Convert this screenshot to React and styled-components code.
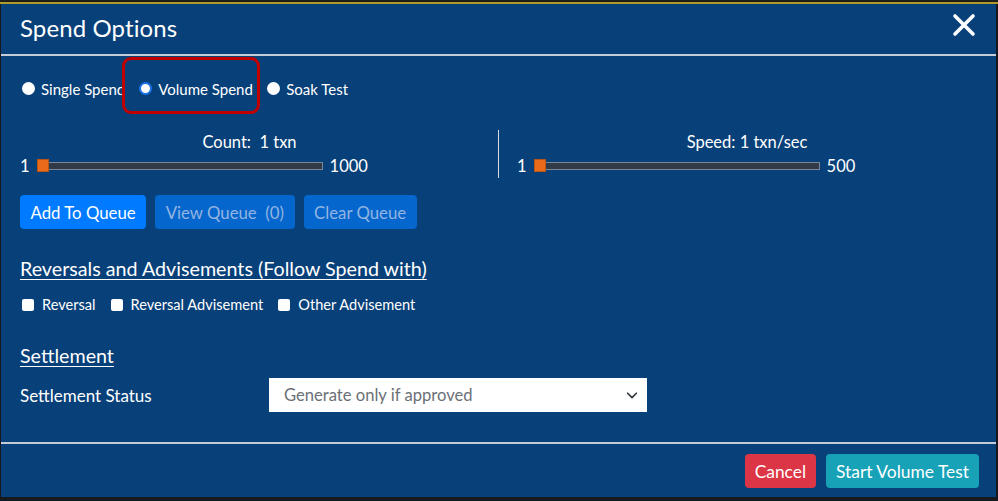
import React from "react";
import styled, { createGlobalStyle } from "styled-components";

const Global = createGlobalStyle`
  html, body { margin: 0; padding: 0; }
  body {
    width: 998px;
    height: 501px;
    overflow: hidden;
    background: #16191d;
    font-family: Lato, "Noto Sans", sans-serif;
  }
`;

const TopStrip = styled.div`
  height: 4px;
  background: #1e1f1c;
  box-shadow: inset 0 -2px 0 #b09a2a;
`;

const Modal = styled.div`
  margin-left: 1px;
  width: 995px;
  height: 493px;
  background: #084079;
  color: #ffffff;
  display: flex;
  flex-direction: column;
`;

const Header = styled.div`
  height: 52px;
  box-sizing: border-box;
  border-bottom: 2px solid #c4ccd6;
  display: flex;
  align-items: center;
  justify-content: space-between;
  padding: 0 20px 0 19px;
`;

const Title = styled.h1`
  margin: -3px 0 0 0;
  font-size: 24px;
  font-weight: 400;
  letter-spacing: 0.1px;
`;

const Close = styled.button`
  background: none;
  border: 0;
  padding: 0;
  width: 28px;
  height: 28px;
  display: flex;
  align-items: center;
  justify-content: center;
  margin-top: -9px;
  margin-right: -2px;
`;

const Body = styled.div`
  flex: 1;
  display: flex;
  flex-direction: column;
  border-bottom: 2px solid #c4ccd6;
`;

const RadioRow = styled.div`
  display: flex;
  align-items: center;
  padding: 6px 0 0 21px;
  box-sizing: border-box;
  height: 57px;
  margin-top: 1px;
  font-size: 15px;
`;

const Option = styled.label`
  display: flex;
  align-items: center;
  gap: 6px;
  white-space: nowrap;
`;

const Radio = styled.span`
  width: 13px;
  height: 13px;
  border-radius: 50%;
  box-sizing: border-box;
  background: #ffffff;
  border: ${(p) => (p.$checked ? "2px solid #1a73e8" : "0")};
  flex: none;
`;

const Annotation = styled.div`
  display: flex;
  align-items: center;
  height: 57px;
  box-sizing: border-box;
  border: 3px solid #c00000;
  border-radius: 9px;
  background: #084079;
  padding: 6px 0 0 14px;
  margin-top: -6px;
  margin-left: -3px;
  margin-right: 7px;
  width: 138px;
  flex: none;
`;

const Sliders = styled.div`
  display: grid;
  grid-template-columns: 497px 1fr;
  margin-top: 16px;
`;

const SliderCol = styled.div`
  display: flex;
  flex-direction: column;
  border-left: ${(p) => (p.$divider ? "1px solid #d8dde3" : "0")};
  padding-left: ${(p) => (p.$divider ? 18 : 19)}px;
  height: 48px;
  box-sizing: border-box;
`;

const SliderLabel = styled.div`
  text-align: center;
  font-size: 16.5px;
  line-height: 20px;
  margin-left: -19px;
  padding-top: 2px;
  white-space: pre;
`;

const SliderLine = styled.div`
  display: flex;
  align-items: center;
  font-size: 16.5px;
  line-height: 20px;
  margin-top: 4px;
  gap: 5px;
`;

const Track = styled.div`
  position: relative;
  width: 285px;
  height: 8px;
  box-sizing: border-box;
  background: #303b47;
  border: 1px solid #7b8794;
  margin: 0 2px 0 3px;
`;

const Thumb = styled.span`
  position: absolute;
  left: -2px;
  top: -4px;
  width: 12px;
  height: 13px;
  box-sizing: border-box;
  background: #e86a1a;
  border: 1px solid #b85515;
`;

const ButtonRow = styled.div`
  display: flex;
  gap: 9px;
  padding-left: 19px;
  margin-top: 17px;
`;

const QueueButton = styled.button`
  height: 34px;
  border: 0;
  border-radius: 4px;
  padding: 0 10.5px;
  font-family: inherit;
  font-size: 16.8px;
  background: ${(p) => (p.$disabled ? "#0566cd" : "#007bff")};
  color: ${(p) => (p.$disabled ? "#93b4e1" : "#ffffff")};
  white-space: pre;
`;

const SectionTitle = styled.h2`
  margin: ${(p) => p.$top}px 0 0 19px;
  font-size: 19.7px;
  font-weight: 400;
  text-decoration: underline;
  text-underline-offset: 3px;
  text-decoration-thickness: 1px;
  line-height: 24px;
`;

const CheckRow = styled.div`
  display: flex;
  align-items: center;
  gap: 15px;
  padding-left: 21px;
  margin-top: 14px;
  font-size: 14.6px;
  line-height: 20px;
`;

const Check = styled.span`
  width: 12px;
  height: 12px;
  border-radius: 2px;
  background: #ffffff;
  flex: none;
`;

const CheckOption = styled.label`
  display: flex;
  align-items: center;
  gap: 8px;
`;

const FieldRow = styled.div`
  display: flex;
  align-items: center;
  padding-left: 19px;
  margin-top: 10px;
`;

const FieldLabel = styled.div`
  width: 249px;
  font-size: 17px;
`;

const Select = styled.div`
  width: 378px;
  height: 34px;
  background: #ffffff;
  color: #6b7076;
  font-size: 16.6px;
  display: flex;
  align-items: center;
  justify-content: space-between;
  padding: 0 8px 0 15px;
  box-sizing: border-box;
`;

const Footer = styled.div`
  display: flex;
  justify-content: flex-end;
  gap: 10px;
  padding: 10px 17px 0 0;
  height: 53px;
  box-sizing: border-box;
`;

const FooterButton = styled.button`
  height: 34px;
  border: 0;
  border-radius: 4px;
  padding: 0 10px;
  font-family: inherit;
  font-size: 17.4px;
  color: #ffffff;
  background: ${(p) => p.$bg};
`;

export default function App() {
  return (
    <>
      <Global />
      <TopStrip />
      <Modal>
        <Header>
          <Title>Spend Options</Title>
          <Close aria-label="close">
            <svg width="24" height="24" viewBox="0 0 24 24">
              <path d="M3 3 L21 21 M21 3 L3 21" stroke="#fff" strokeWidth="3.6" strokeLinecap="round" />
            </svg>
          </Close>
        </Header>
        <Body>
          <RadioRow>
            <Option>
              <Radio />
              Single Spend
            </Option>
            <Annotation>
              <Option>
                <Radio $checked />
                Volume Spend
              </Option>
            </Annotation>
            <Option>
              <Radio />
              Soak Test
            </Option>
          </RadioRow>
          <Sliders>
            <SliderCol>
              <SliderLabel>Count:  1 txn</SliderLabel>
              <SliderLine>
                1
                <Track>
                  <Thumb />
                </Track>
                1000
              </SliderLine>
            </SliderCol>
            <SliderCol $divider>
              <SliderLabel>Speed: 1 txn/sec</SliderLabel>
              <SliderLine>
                1
                <Track>
                  <Thumb />
                </Track>
                500
              </SliderLine>
            </SliderCol>
          </Sliders>
          <ButtonRow>
            <QueueButton>Add To Queue</QueueButton>
            <QueueButton $disabled>View Queue  (0)</QueueButton>
            <QueueButton $disabled>Clear Queue</QueueButton>
          </ButtonRow>
          <SectionTitle $top={28}>Reversals and Advisements (Follow Spend with)</SectionTitle>
          <CheckRow>
            <CheckOption>
              <Check />
              Reversal
            </CheckOption>
            <CheckOption>
              <Check />
              Reversal Advisement
            </CheckOption>
            <CheckOption>
              <Check />
              Other Advisement
            </CheckOption>
          </CheckRow>
          <SectionTitle $top={29}>Settlement</SectionTitle>
          <FieldRow>
            <FieldLabel>Settlement Status</FieldLabel>
            <Select>
              Generate only if approved
              <svg width="14" height="14" viewBox="0 0 16 16">
                <path d="M3 6 L8 11 L13 6" fill="none" stroke="#343a40" strokeWidth="2" strokeLinecap="round" strokeLinejoin="round" />
              </svg>
            </Select>
          </FieldRow>
        </Body>
        <Footer>
          <FooterButton $bg="#dc3545">Cancel</FooterButton>
          <FooterButton $bg="#17a2b8">Start Volume Test</FooterButton>
        </Footer>
      </Modal>
    </>
  );
}
